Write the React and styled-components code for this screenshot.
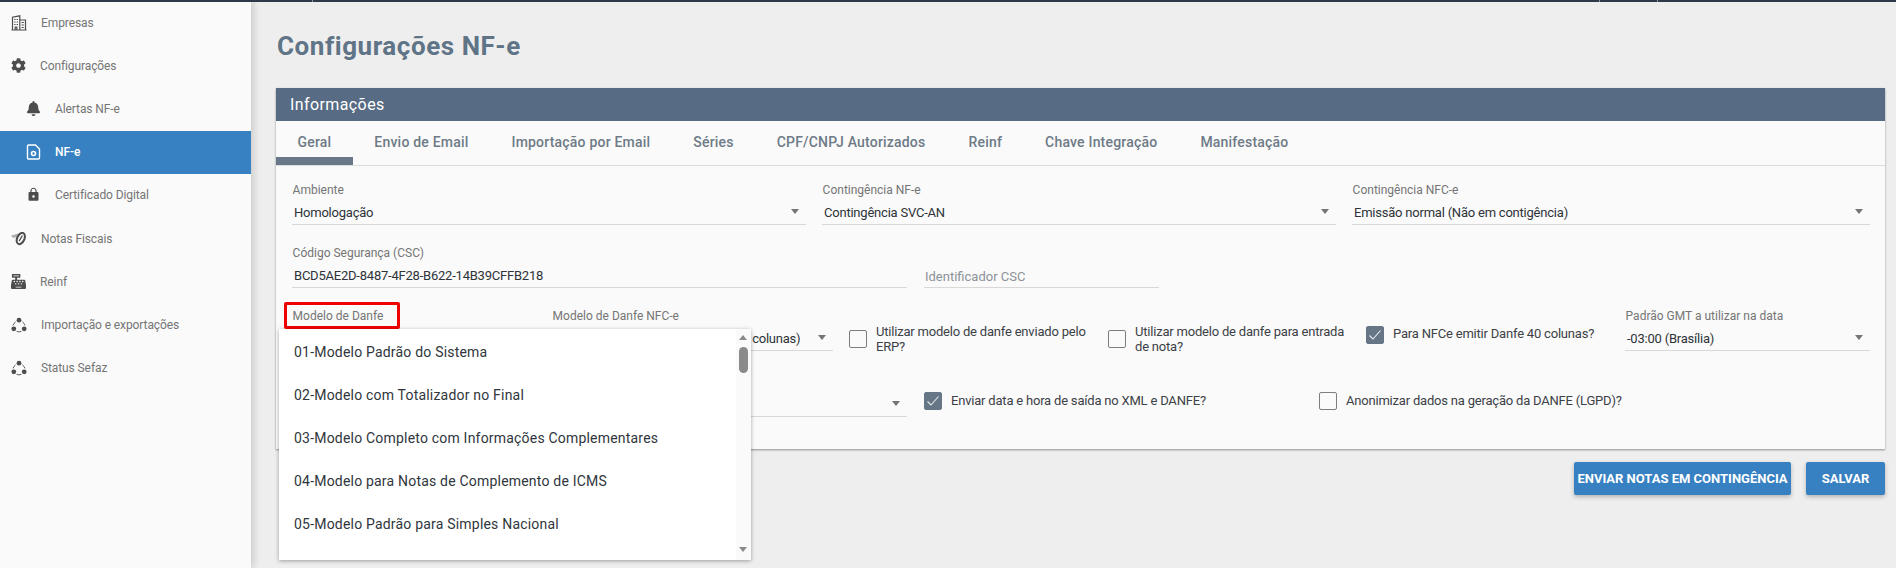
import styled, { createGlobalStyle } from 'styled-components';
import { FaBell, FaCashRegister, FaCog } from 'react-icons/fa';
import { MdLock } from 'react-icons/md';

const GlobalStyle = createGlobalStyle`
    html, body {
        margin: 0;
        height: 568px;
        overflow: hidden;
        background: #eeeeee;
        font-family: Roboto, "Liberation Sans", sans-serif;
    }
`;

const Page = styled.div`
    display: flex;
    position: relative;
    width: 1896px;
    height: 568px;
    overflow: hidden;
`;

const TopBar = styled.div`
    position: absolute;
    top: 0;
    left: 0;
    right: 0;
    height: 2px;
    background: #2c3949;
    z-index: 3;
`;

const TopTick = styled.i`
    position: absolute;
    top: 0;
    width: 1px;
    height: 2px;
    background: #8b949e;
    left: ${(p) => p.$x}px;
`;

const Sidebar = styled.nav`
    flex: 0 0 251px;
    padding-top: 2px;
    background: #fafafa;
    box-shadow: 3px 0 7px rgba(0, 0, 0, 0.14);
    z-index: 2;
`;

const NavItem = styled.div`
    display: flex;
    align-items: center;
    box-sizing: border-box;
    height: 43px;
    margin-top: ${(p) => (p.$drop ? 1 : 0)}px;
    padding: 0 0 2px ${(p) => (p.$nested ? 26 : 11)}px;
    font-size: 12px;
    letter-spacing: -0.1px;
    color: ${(p) => (p.$active ? '#ffffff' : '#757575')};
    font-weight: ${(p) => (p.$active ? 500 : 400)};
    background: ${(p) => (p.$active ? '#3780c1' : 'transparent')};
`;

const NavIcon = styled.span`
    display: flex;
    align-items: center;
    justify-content: center;
    flex: 0 0 15px;
    height: 16px;
    margin-right: 14px;
    font-size: 15px;
    color: ${(p) => (p.$active ? '#ffffff' : '#4d4d4d')};
`;

const Main = styled.main`
    flex: 1;
    padding: 0 11px 0 25px;
    min-width: 0;
`;

const Title = styled.h1`
    margin: 32px 0 0 1px;
    height: 56px;
    font-size: 26px;
    line-height: 28px;
    letter-spacing: 0.55px;
    font-weight: 700;
    color: #5f7486;
`;

const Panel = styled.section`
    background: #fafafa;
    height: 361px;
    box-shadow: 0 1px 2px rgba(0, 0, 0, 0.4);
`;

const PanelHeader = styled.div`
    height: 33px;
    padding-left: 14px;
    font-size: 16px;
    line-height: 33px;
    letter-spacing: 0.4px;
    color: #ffffff;
    background: #576c84;
`;

const Tabs = styled.div`
    display: flex;
    height: 44px;
    border-bottom: 1px solid #dddddd;
`;

const Tab = styled.div`
    padding: 0 21.5px;
    font-size: 14px;
    font-weight: 500;
    line-height: 43px;
    letter-spacing: 0.2px;
    color: #6e7b87;
    border-bottom: ${(p) => (p.$active ? '8px solid #687888' : '0')};
    height: ${(p) => (p.$active ? 36 : 44)}px;
`;

const Form = styled.div`
    padding: 17px 15px 0 16px;
`;

const Row = styled.div`
    display: grid;
    grid-template-columns: ${(p) => p.$cols};
    column-gap: ${(p) => p.$gap || 16}px;
    margin-bottom: ${(p) => p.$after || 0}px;
    align-items: start;
`;

const Field = styled.div`
    position: relative;
    height: 41px;
    border-bottom: 1px solid #d8d8d8;
`;

const FieldLabel = styled.label`
    display: block;
    padding-left: 0.6px;
    height: 15px;
    font-size: 12px;
    line-height: 15px;
    color: #757575;
`;

const FieldValue = styled.div`
    padding: 7px 0 0 2px;
    font-size: 13px;
    line-height: 16px;
    letter-spacing: -0.22px;
    color: #2e3338;
    white-space: nowrap;
`;

const Placeholder = styled.div`
    padding: 23px 0 0 1px;
    font-size: 13px;
    line-height: 16px;
    color: #8c9298;
`;

const Caret = styled.i`
    position: absolute;
    right: 7px;
    top: 26px;
    width: 0;
    height: 0;
    border-left: 4.5px solid transparent;
    border-right: 4.5px solid transparent;
    border-top: 5px solid #757575;
`;

const CheckRow = styled.div`
    display: flex;
    align-items: flex-start;
    height: 42px;
    font-size: 13px;
    line-height: 15px;
    letter-spacing: -0.2px;
    color: #3c4146;
`;

const CheckText = styled.span`
    padding-top: ${(p) => p.$top}px;
`;

const CheckBox = styled.span`
    flex: 0 0 18px;
    box-sizing: border-box;
    height: 18px;
    margin-right: 9px;
    margin-top: ${(p) => p.$top}px;
    border-radius: 2px;
    border: 1px solid ${(p) => (p.$checked ? '#667687' : '#7d7d7d')};
    background: ${(p) => (p.$checked ? '#667687' : 'transparent')};
    display: flex;
    align-items: center;
    justify-content: center;
`;

const Actions = styled.div`
    display: flex;
    justify-content: flex-end;
    gap: 15px;
    margin-top: 13px;
`;

const Button = styled.button`
    width: ${(p) => p.$w}px;
    height: 33px;
    border: 0;
    padding: 0;
    border-radius: 2px;
    font-family: inherit;
    font-size: 13px;
    font-weight: 700;
    color: #ffffff;
    background: #3780c1;
    box-shadow: 0 2px 4px rgba(0, 0, 0, 0.25);
`;

const Annotation = styled.div`
    position: absolute;
    left: 284px;
    top: 302px;
    width: 116px;
    height: 27px;
    box-sizing: border-box;
    border: 3px solid #f00000;
    border-radius: 2px;
    z-index: 4;
`;

const Menu = styled.div`
    position: absolute;
    left: 279px;
    top: 329px;
    width: 472px;
    height: 231px;
    display: flex;
    background: #ffffff;
    box-shadow: 0 1px 4px rgba(0, 0, 0, 0.35);
    z-index: 5;
`;

const MenuList = styled.div`
    flex: 1;
    padding-top: 2px;
`;

const MenuItem = styled.div`
    height: 43px;
    padding-left: 15px;
    font-size: 14px;
    line-height: 43px;
    letter-spacing: 0.2px;
    color: #30363c;
`;

const ScrollTrack = styled.div`
    position: relative;
    flex: 0 0 15px;
    background: #fafafa;
`;

const ScrollArrow = styled.i`
    position: absolute;
    left: 3px;
    width: 0;
    height: 0;
    border-left: 4.5px solid transparent;
    border-right: 4.5px solid transparent;
    ${(p) => (p.$down
        ? 'bottom: 8px; border-top: 5px solid #8a8a8a;'
        : 'top: 6px; border-bottom: 5px solid #8a8a8a;')}
`;

const ScrollThumb = styled.i`
    position: absolute;
    left: 3px;
    top: 18px;
    width: 9px;
    height: 26px;
    border-radius: 4.5px;
    background: #8a8a8a;
`;

const BuildingIcon = () => (
    <svg width="16" height="16" viewBox="0 0 16 16" fill="none" stroke="currentColor" strokeWidth="1.2">
        <path d="M1.5 15V2.2L8.8 0.8V15M8.8 5H14.5V15M0.5 15H15.5" />
        <path d="M3.2 4.5h1.4M5.6 4.5h1.4M3.2 7h1.4M5.6 7h1.4M3.2 9.5h1.4M5.6 9.5h1.4M10.6 7.5h2.2M10.6 10h2.2M10.6 12.5h2.2M4.2 15v-3h1.6v3" />
    </svg>
);

const FileGearIcon = () => (
    <svg width="15" height="16" viewBox="0 0 15 16">
        <path d="M1.5 2.2C1.5 1.5 2 1 2.7 1H9.5L13.5 5V13.8C13.5 14.5 13 15 12.3 15H2.7C2 15 1.5 14.5 1.5 13.8Z" fill="none" stroke="currentColor" strokeWidth="1.4" />
        <circle cx="7.5" cy="9.5" r="2" fill="none" stroke="currentColor" strokeWidth="1.6" />
    </svg>
);

const NotesIcon = () => (
    <svg width="16" height="14" viewBox="0 0 16 14">
        <path d="M0 3.5l7.5-2v3.2L2 6z" fill="#b0b0b0" />
        <ellipse cx="9.8" cy="6.5" rx="3.6" ry="6" transform="rotate(25 9.8 6.5)" fill="none" stroke="#4d4d4d" strokeWidth="2" />
        <path d="M8.2 9l3.2-5.5" stroke="#4d4d4d" strokeWidth="1.4" />
    </svg>
);

const TriadIcon = () => (
    <svg width="16" height="16" viewBox="0 0 16 16" fill="currentColor">
        <circle cx="8" cy="3.2" r="2.4" />
        <circle cx="2.8" cy="11.8" r="2.4" />
        <circle cx="13.2" cy="11.8" r="2.4" />
        <path d="M4.6 4.9A6.6 6.6 0 0 0 2 8.4M11.4 4.9A6.6 6.6 0 0 1 14 8.4M5.6 14.4A6.6 6.6 0 0 0 10.4 14.4" fill="none" stroke="currentColor" strokeWidth="0.9" />
    </svg>
);

const Tick = () => (
    <svg width="14" height="12" viewBox="0 0 14 12" fill="none" stroke="#e8ebee" strokeWidth="1.1">
        <path d="M1.5 6.5L5 10L12.5 1.5" />
    </svg>
);

const NAV = [
    { label: 'Empresas', icon: <BuildingIcon /> },
    { label: 'Configurações', icon: <FaCog /> },
    { label: 'Alertas NF-e', icon: <FaBell />, nested: true },
    { label: 'NF-e', icon: <FileGearIcon />, nested: true, active: true },
    { label: 'Certificado Digital', icon: <MdLock size={15} />, nested: true },
    { label: 'Notas Fiscais', icon: <NotesIcon />, drop: true },
    { label: 'Reinf', icon: <FaCashRegister /> },
    { label: 'Importação e exportações', icon: <TriadIcon /> },
    { label: 'Status Sefaz', icon: <TriadIcon /> },
];

const TABS = ['Geral', 'Envio de Email', 'Importação por Email', 'Séries', 'CPF/CNPJ Autorizados', 'Reinf', 'Chave Integração', 'Manifestação'];

const OPTIONS = [
    '01-Modelo Padrão do Sistema',
    '02-Modelo com Totalizador no Final',
    '03-Modelo Completo com Informações Complementares',
    '04-Modelo para Notas de Complemento de ICMS',
    '05-Modelo Padrão para Simples Nacional',
];

const Select = ({ label, value }) => (
    <Field>
        <FieldLabel>{label}</FieldLabel>
        <FieldValue>{value}</FieldValue>
        <Caret />
    </Field>
);

const Check = ({ checked, boxTop, textTop, children }) => (
    <CheckRow>
        <CheckBox $checked={checked} $top={boxTop}>{checked && <Tick />}</CheckBox>
        <CheckText $top={textTop}>{children}</CheckText>
    </CheckRow>
);

export default function App() {
    return (
        <Page>
            <GlobalStyle />
            <TopBar>
                <TopTick $x={312} />
                <TopTick $x={1599} />
                <TopTick $x={1657} />
            </TopBar>
            <Sidebar>
                {NAV.map((item) => (
                    <NavItem key={item.label} $nested={item.nested} $active={item.active} $drop={item.drop}>
                        <NavIcon $active={item.active}>{item.icon}</NavIcon>
                        {item.label}
                    </NavItem>
                ))}
            </Sidebar>
            <Main>
                <Title>Configurações NF-e</Title>
                <Panel>
                    <PanelHeader>Informações</PanelHeader>
                    <Tabs>
                        {TABS.map((tab, i) => <Tab key={tab} $active={i === 0}>{tab}</Tab>)}
                    </Tabs>
                    <Form>
                        <Row $cols="514px 514px 518px" $after={21}>
                            <Select label="Ambiente" value="Homologação" />
                            <Select label="Contingência NF-e" value="Contingência SVC-AN" />
                            <Select label="Contingência NFC-e" value="Emissão normal (Não em contigência)" />
                        </Row>
                        <Row $cols="615px 235px" $gap={17} $after={21}>
                            <Field>
                                <FieldLabel>Código Segurança (CSC)</FieldLabel>
                                <FieldValue>BCD5AE2D-8487-4F28-B622-14B39CFFB218</FieldValue>
                            </Field>
                            <Field>
                                <Placeholder>Identificador CSC</Placeholder>
                            </Field>
                        </Row>
                        <Row $cols="244px 281px 243px 242px 243px 245px" $after={24}>
                            <Select label="Modelo de Danfe" />
                            <Select label="Modelo de Danfe NFC-e" value="01-Modelo Padrão de Danfe A4 (80 colunas)" />
                            <Check boxTop={21} textTop={15}>Utilizar modelo de danfe enviado pelo ERP?</Check>
                            <Check boxTop={21} textTop={15}>Utilizar modelo de danfe para entrada de nota?</Check>
                            <Check boxTop={17} textTop={17} checked>Para NFCe emitir Danfe 40 colunas?</Check>
                            <Select label="Padrão GMT a utilizar na data" value="-03:00 (Brasília)" />
                        </Row>
                        <Row $cols="615px 378px 551px" $gap={17}>
                            <Select />
                            <Check boxTop={17} textTop={18} checked>Enviar data e hora de saída no XML e DANFE?</Check>
                            <Check boxTop={17} textTop={18}>Anonimizar dados na geração da DANFE (LGPD)?</Check>
                        </Row>
                    </Form>
                </Panel>
                <Actions>
                    <Button $w={217}>ENVIAR NOTAS EM CONTINGÊNCIA</Button>
                    <Button $w={79}>SALVAR</Button>
                </Actions>
            </Main>
            <Annotation />
            <Menu>
                <MenuList>
                    {OPTIONS.map((option) => <MenuItem key={option}>{option}</MenuItem>)}
                </MenuList>
                <ScrollTrack>
                    <ScrollArrow />
                    <ScrollThumb />
                    <ScrollArrow $down />
                </ScrollTrack>
            </Menu>
        </Page>
    );
}
